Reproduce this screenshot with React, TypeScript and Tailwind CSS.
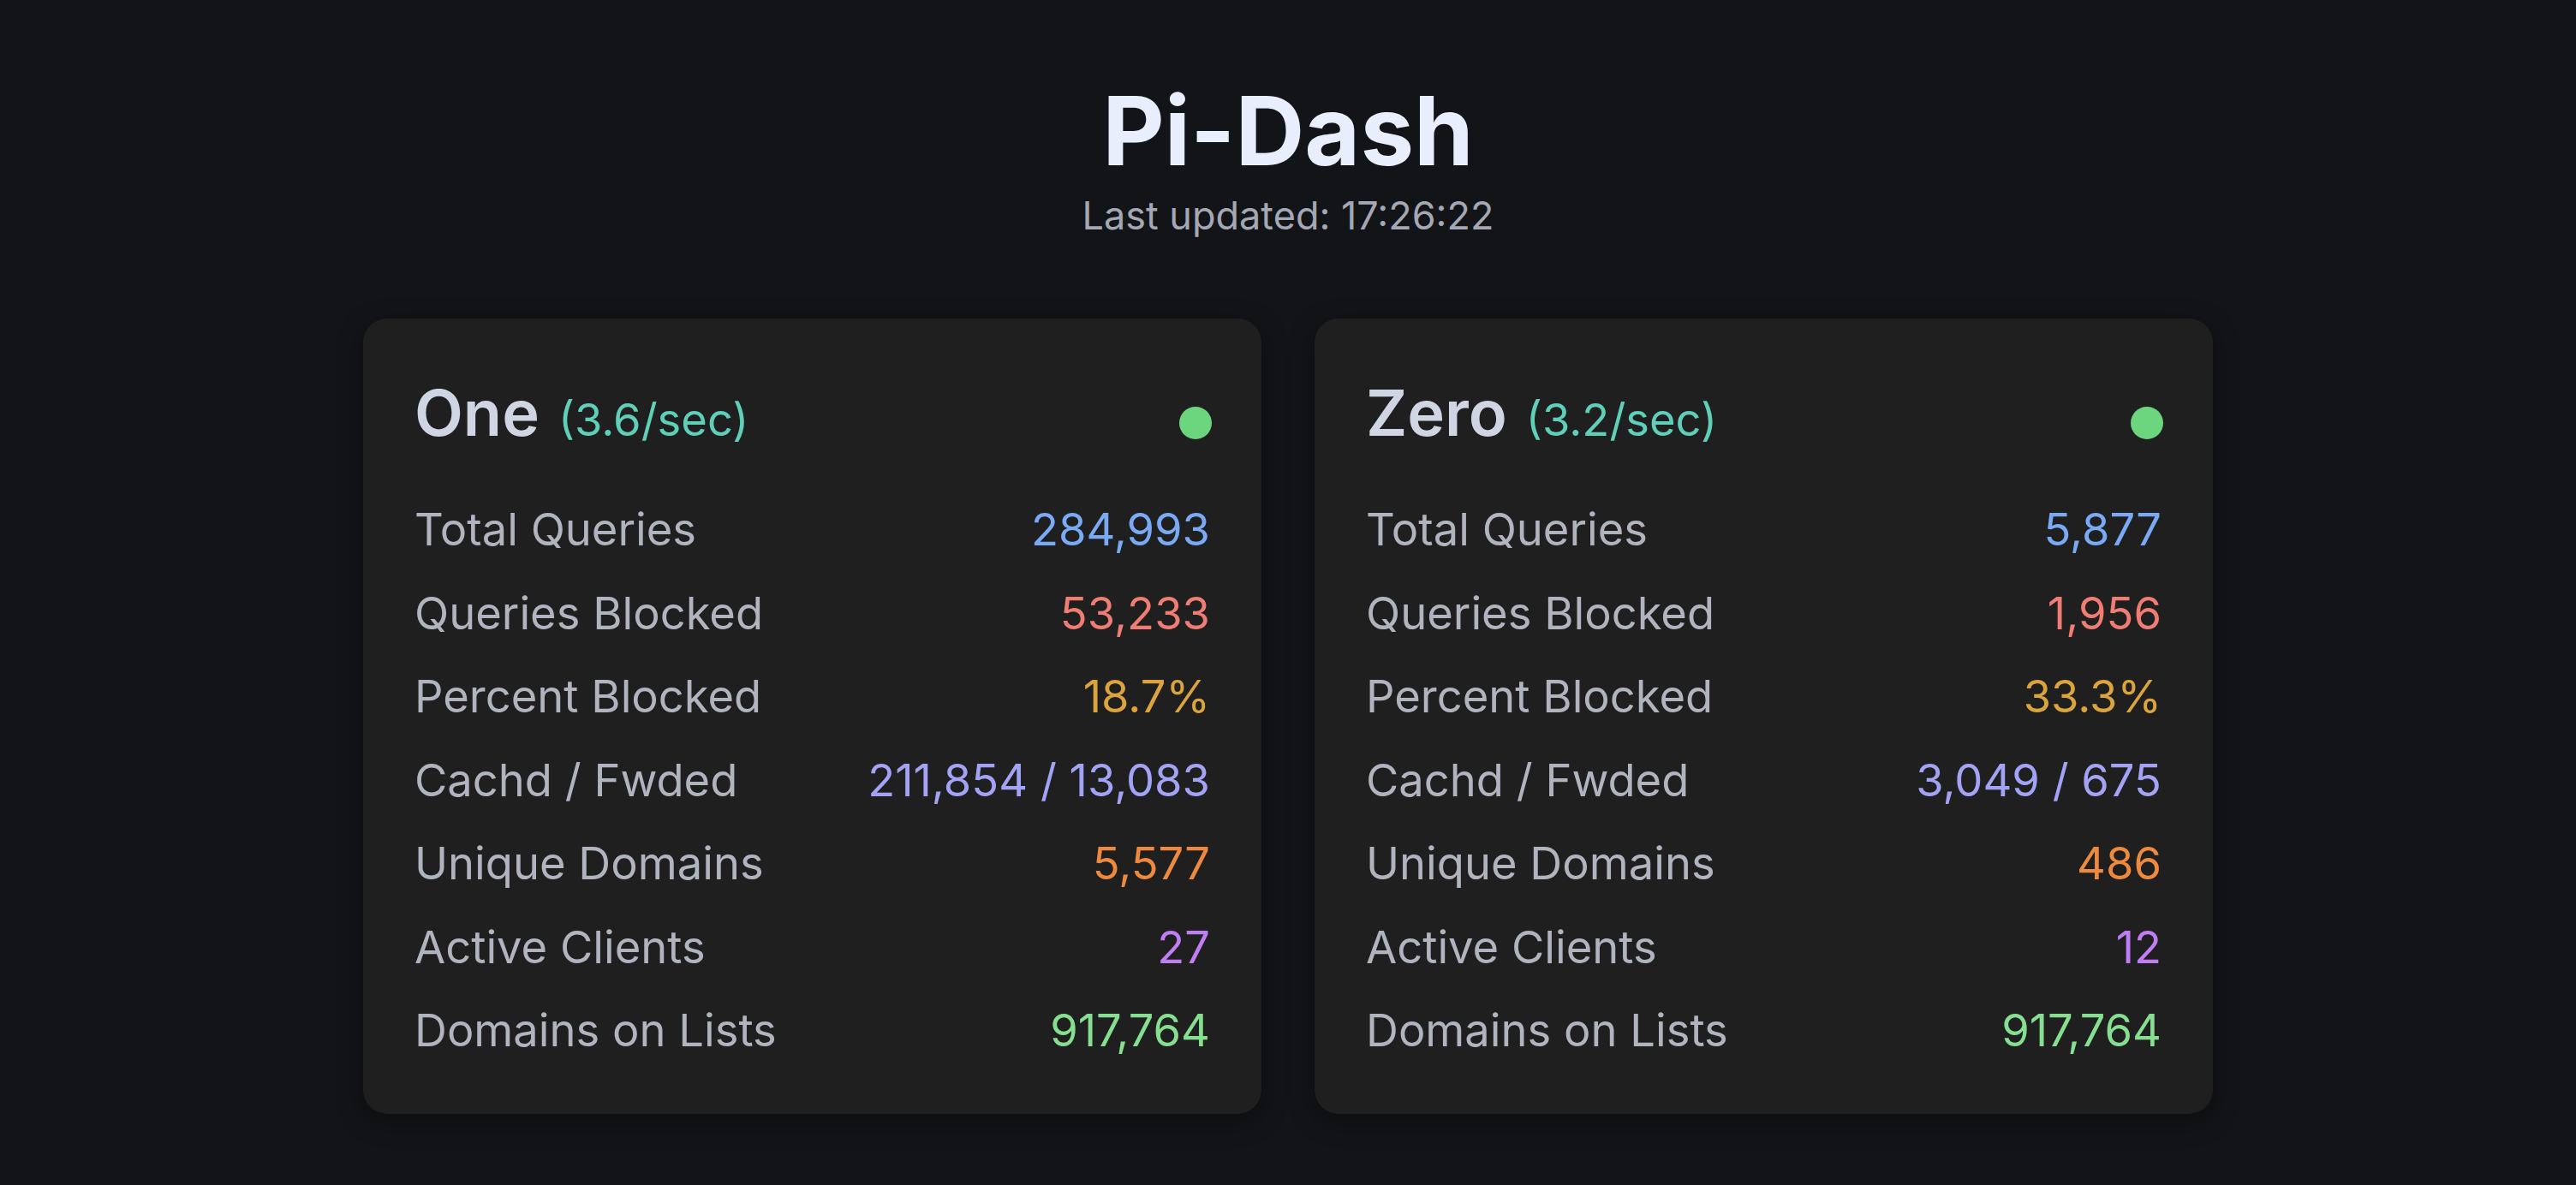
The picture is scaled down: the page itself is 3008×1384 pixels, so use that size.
import React from "react";

type Row = { label: string; value: string; color: string };

const servers: { name: string; rate: string; rows: Row[] }[] = [
  {
    name: "One",
    rate: "(3.6/sec)",
    rows: [
      { label: "Total Queries", value: "284,993", color: "text-[#79aaf3]" },
      { label: "Queries Blocked", value: "53,233", color: "text-[#ef7d74]" },
      { label: "Percent Blocked", value: "18.7%", color: "text-[#dca43e]" },
      { label: "Cachd / Fwded", value: "211,854 / 13,083", color: "text-[#a3a3f6]" },
      { label: "Unique Domains", value: "5,577", color: "text-[#ee8a40]" },
      { label: "Active Clients", value: "27", color: "text-[#c07df4]" },
      { label: "Domains on Lists", value: "917,764", color: "text-[#86df90]" },
    ],
  },
  {
    name: "Zero",
    rate: "(3.2/sec)",
    rows: [
      { label: "Total Queries", value: "5,877", color: "text-[#79aaf3]" },
      { label: "Queries Blocked", value: "1,956", color: "text-[#ef7d74]" },
      { label: "Percent Blocked", value: "33.3%", color: "text-[#dca43e]" },
      { label: "Cachd / Fwded", value: "3,049 / 675", color: "text-[#a3a3f6]" },
      { label: "Unique Domains", value: "486", color: "text-[#ee8a40]" },
      { label: "Active Clients", value: "12", color: "text-[#c07df4]" },
      { label: "Domains on Lists", value: "917,764", color: "text-[#86df90]" },
    ],
  },
];

function Card({ name, rate, rows }: { name: string; rate: string; rows: Row[] }) {
  return (
    <div className="flex flex-col rounded-[28px] bg-[#1f1f1f] p-[60px] shadow-[0_8px_30px_rgba(0,0,0,0.35)]">
      <div className="flex h-[108px] items-center justify-between">
        <div className="flex items-baseline gap-[22px]">
          <span className="text-[74px] leading-[108px] font-semibold text-[#cfd5e3]">{name}</span>
          <span className="text-[52.5px] leading-[108px] text-[#5fcfba]">{rate}</span>
        </div>
        <div className="mt-[16px] mr-[-2px] h-[38px] w-[38px] rounded-full bg-[#6bd67e]" />
      </div>
      <div className="mt-[41px] flex flex-col gap-[22.5px]">
        {rows.map((r) => (
          <div key={r.label} className="flex h-[75px] items-center justify-between text-[52.5px] leading-[75px]">
            <span className="text-[#b0b4bf]">{r.label}</span>
            <span className={r.color}>{r.value}</span>
          </div>
        ))}
      </div>
    </div>
  );
}

export default function App() {
  return (
    <div
      className="min-h-screen w-full bg-[#131417] pt-[96px] pb-[80px]"
      style={{ fontFamily: "Inter, 'Noto Sans', sans-serif" }}
    >
      <div className="flex flex-col items-center">
        <h1 className="text-[112px] leading-[112px] font-bold text-[#e8eefc]">Pi-Dash</h1>
        <p className="mt-[12px] text-[45px] leading-[64px] text-[#a3a8b4]">Last updated: 17:26:22</p>
      </div>
      <div className="mx-auto mt-[88px] grid w-[2160px] grid-cols-2 gap-[62px]">
        {servers.map((s) => (
          <Card key={s.name} {...s} />
        ))}
      </div>
    </div>
  );
}
